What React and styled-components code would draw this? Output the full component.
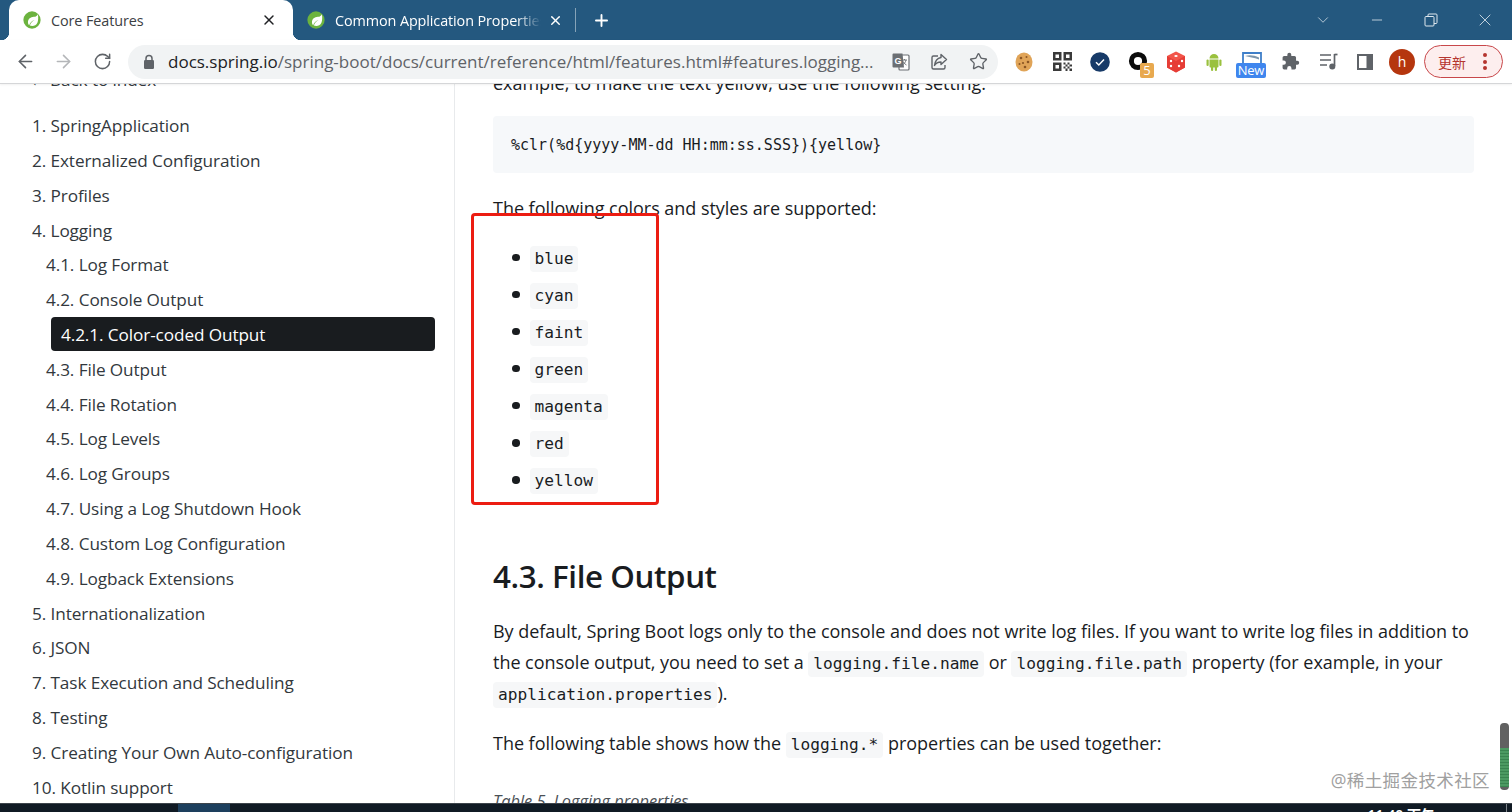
import React from "react";
import styled, { createGlobalStyle } from "styled-components";
import { ArrowLeft, ArrowRight, RotateCw, Star, X, Plus, Minus, ChevronDown } from "lucide-react";

const Global = createGlobalStyle`
  html, body { margin: 0; padding: 0; height: 100%; overflow: hidden; background: #fff; }
  #root { height: 812px; }
  * { box-sizing: border-box; }
`;

const UI = `"Open Sans", "Noto Sans", "Noto Sans CJK SC", sans-serif`;
const MONO = `"DejaVu Sans Mono", "Liberation Mono", monospace`;

const Page = styled.div`
  position: relative;
  width: 1512px;
  height: 812px;
  display: flex;
  flex-direction: column;
  overflow: hidden;
  font-family: ${UI};
  color: #191c1f;
`;

/* tab strip */
const TabStrip = styled.div`
  height: 40px;
  flex: none;
  background: #24587f;
  display: flex;
  align-items: stretch;
  padding-left: 9px;
`;
const Tab = styled.div`
  position: relative;
  width: ${(p) => p.$w}px;
  flex: none;
  display: flex;
  align-items: center;
  border-radius: 10px 10px 0 0;
  background: ${(p) => (p.$active ? "#fff" : "transparent")};
  color: ${(p) => (p.$active ? "#3c4043" : "#fff")};
  padding-left: ${(p) => p.$pad}px;
  font-size: 14.4px;
  letter-spacing: -0.1px;
  ${(p) =>
    p.$active
      ? `
    &::before, &::after {
      content: "";
      position: absolute;
      bottom: 0;
      width: 8px;
      height: 8px;
    }
    &::before { left: -8px; background: radial-gradient(circle at 0 0, #24587f 8px, #fff 8.5px); }
    &::after { right: -8px; background: radial-gradient(circle at 100% 0, #24587f 8px, #fff 8.5px); }
  `
      : ""}
`;
const TabTitle = styled.span`
  margin-left: 10px;
  width: ${(p) => p.$w}px;
  white-space: nowrap;
  overflow: hidden;
  -webkit-mask-image: ${(p) => (p.$fade ? "linear-gradient(90deg,#000 88%,transparent)" : "none")};
  mask-image: ${(p) => (p.$fade ? "linear-gradient(90deg,#000 88%,transparent)" : "none")};
`;
const TabClose = styled.span`
  display: flex;
  margin-left: ${(p) => p.$ml}px;
  color: ${(p) => (p.$light ? "#fff" : "#202124")};
`;
const TabDivider = styled.div`
  width: 1px;
  height: 24px;
  margin: 8px 0 0 10px;
  background: rgba(255, 255, 255, 0.45);
`;
const NewTab = styled.div`
  display: flex;
  align-items: center;
  margin-left: 16px;
  color: #fff;
`;
const WindowControls = styled.div`
  margin-left: auto;
  display: flex;
  align-items: center;
  color: #dfe8ef;
`;
const WinBtn = styled.div`
  width: 54px;
  display: flex;
  justify-content: center;
`;

/* toolbar */
const Toolbar = styled.div`
  height: 44px;
  flex: none;
  background: #fff;
  border-bottom: 1px solid #d5d6d8;
  display: flex;
  align-items: center;
  padding-left: 6px;
  box-shadow: 0 1px 2px rgba(0, 0, 0, 0.06);
  z-index: 2;
`;
const NavSlot = styled.div`
  width: 38.5px;
  flex: none;
  display: flex;
  justify-content: center;
  color: ${(p) => (p.$off ? "#b4b6b9" : "#5f6368")};
`;
const Omnibox = styled.div`
  width: 870px;
  height: 34px;
  margin-left: 6.5px;
  flex: none;
  border-radius: 17px;
  background: #f1f3f4;
  display: flex;
  align-items: center;
  padding-left: 14px;
`;
const Url = styled.div`
  margin-left: 12px;
  width: 714px;
  font-size: 17px;
  white-space: nowrap;
  overflow: hidden;
  color: #5f6368;
  b { font-weight: 400; color: #202124; }
`;
const OmniIcon = styled.div`
  width: ${(p) => p.$w}px;
  flex: none;
  display: flex;
  justify-content: center;
  color: #5f6368;
`;
const Extensions = styled.div`
  display: flex;
  align-items: center;
  margin-left: 7px;
`;
const ExtSlot = styled.div`
  position: relative;
  width: ${(p) => p.$w || 38}px;
  height: 34px;
  margin-left: ${(p) => p.$ml || 0}px;
  flex: none;
  display: flex;
  justify-content: center;
  align-items: center;
  color: #5f6368;
`;
const Badge = styled.span`
  position: absolute;
  right: 3px;
  top: 18px;
  width: 14px;
  height: 15px;
  background: #e8a94f;
  color: #fff;
  font-size: 13px;
  line-height: 15px;
  text-align: center;
  border-radius: 2px;
`;
const NewBadge = styled.span`
  position: absolute;
  left: 3px;
  width: 30px;
  top: 18px;
  height: 15px;
  background: #3f86ee;
  color: #fff;
  font-size: 13px;
  line-height: 15px;
  letter-spacing: -0.3px;
  text-align: center;
  border-radius: 2px;
`;
const Avatar = styled.div`
  width: 26px;
  height: 26px;
  border-radius: 50%;
  background: #b5360e;
  color: #fff;
  font-size: 14px;
  display: flex;
  align-items: center;
  justify-content: center;
`;
const UpdateButton = styled.div`
  width: 79px;
  height: 33px;
  margin-left: 9px;
  flex: none;
  border: 1.5px solid #c8474a;
  border-radius: 17px;
  background: #fdeeee;
  color: #b5352f;
  font-size: 14px;
  display: flex;
  align-items: center;
  padding-left: 13px;
`;
const Dots = styled.span`
  margin-left: 17px;
  display: flex;
  flex-direction: column;
  gap: 2.5px;
  i { width: 4px; height: 4px; border-radius: 50%; background: #b5352f; }
`;

/* page */
const Body = styled.div`
  flex: 1;
  min-height: 0;
  display: flex;
  overflow: hidden;
`;
const Sidebar = styled.nav`
  width: 455px;
  flex: none;
  border-right: 1px solid #e8eaec;
  padding-left: 32px;
  margin-top: -22px;
`;
const BackRow = styled.div`
  height: 34.84px;
  margin-bottom: 11.3px;
  display: flex;
  align-items: center;
  font-size: 17.2px;
  letter-spacing: -0.1px;
  color: #32383d;
  i { width: 18px; font-style: normal; font-size: 11px; transform: translateY(3px); }
`;
const NavRow = styled.div`
  height: 34.84px;
  display: flex;
  align-items: center;
  font-size: 17.2px;
  letter-spacing: -0.1px;
  white-space: nowrap;
  color: #32383d;
  padding-left: ${(p) => p.$indent || 0}px;
`;
const ActiveRow = styled.div`
  width: 384px;
  height: 34px;
  margin: 0.4px 0 0.44px 19px;
  padding-left: 10px;
  border-radius: 4px;
  background: #191c1f;
  color: #fff;
  display: flex;
  align-items: center;
  font-size: 17.2px;
  letter-spacing: -0.1px;
`;
const Main = styled.main`
  flex: 1;
  min-width: 0;
  padding: 0 38px 0 38px;
  margin-top: -16px;
`;
const Para = styled.p`
  margin: ${(p) => p.$mt || 0}px 0 0;
  font-size: 18px;
  line-height: 31px;
  letter-spacing: -0.03px;
  white-space: nowrap;
`;
const CodeBlock = styled.pre`
  margin: 17px 0 0;
  height: 57px;
  padding: 0 18px;
  background: #f6f8fa;
  border-radius: 4px;
  font-family: ${MONO};
  font-size: 15px;
  line-height: 58px;
`;
const Bullets = styled.ul`
  margin: 16px 0 0;
  padding: 0 0 0 37px;
  list-style: none;
`;
const Bullet = styled.li`
  height: 37.05px;
  display: flex;
  align-items: center;
  &::before {
    content: "";
    width: 7.5px;
    height: 7.5px;
    border-radius: 50%;
    background: #191c1f;
    margin: 0 10px 0 -18px;
    transform: translateY(-1px);
  }
`;
const Code = styled.code`
  display: inline-block;
  height: 26px;
  padding: 0 5px;
  border-radius: 4px;
  background: #f6f7f8;
  font-family: ${MONO};
  font-size: 16.2px;
  line-height: 26px;
  letter-spacing: 0;
  vertical-align: baseline;
`;
const Heading = styled.h3`
  margin: 55px 0 0;
  font-size: 31.3px;
  line-height: 44px;
  font-weight: 600;
  letter-spacing: -0.4px;
  white-space: nowrap;
`;
const Caption = styled.div`
  margin-top: 30px;
  font-size: 16.4px;
  line-height: 24px;
  font-style: italic;
  color: #4a5056;
`;

/* overlays */
const RedBox = styled.div`
  position: absolute;
  left: 471px;
  top: 213px;
  width: 188px;
  height: 292px;
  border: 3.5px solid #ec1c12;
  border-radius: 4px;
  pointer-events: none;
`;
const Watermark = styled.div`
  position: absolute;
  right: 22px;
  top: 767px;
  font-size: 17.5px;
  color: #a0a0a0;
  letter-spacing: 0.4px;
`;
const Minimap = styled.div`
  position: absolute;
  left: 1500px;
  top: 723px;
  width: 9px;
  height: 67px;
  border-radius: 4px;
  overflow: hidden;
  background: repeating-linear-gradient(#4c9a62 0 2px, #3a8450 2px 3px) 0 25px / 100% 39px no-repeat, #616161;
`;

/* taskbar */
const Taskbar = styled.div`
  height: 9px;
  flex: none;
  background: #101a24;
  border-top: 1px solid #3d444b;
  display: flex;
  overflow: hidden;
  position: relative;
`;
const TaskApp = styled.div`
  width: 52px;
  margin-left: 178px;
  background: #1d3f5d;
`;
const Clock = styled.div`
  margin-left: auto;
  color: #fff;
  font-size: 14px;
  font-weight: 600;
  line-height: 15px;
  padding-top: 3px;
  white-space: nowrap;
`;
const TaskDivider = styled.div`
  width: 1px;
  margin: 0 5px 0 71px;
  background: #7c838a;
`;

const Spring = ({ s = 18 }) => (
  <svg width={s} height={s} viewBox="0 0 20 20" style={{ flex: "none" }}>
    <circle cx="10" cy="10" r="9.6" fill="#6cb33f" />
    <path d="M16.5 3.5c-.6 1.7-2 2.8-4.400 3-3.600.3-6.600 2.300-6.600 6 0 1.400.6 2.600 1.400 3.300.8-2.600 3-4.700 6-5.700-2.500 1.400-4.400 3.300-5.300 6 3 1.200 6.900.3 8.400-3 1-2.300 1.200-6.500.500-9.600z" fill="#fff" />
  </svg>
);
const Restore = () => (
  <svg width="14" height="14" viewBox="0 0 14 14" fill="none" stroke="currentColor" strokeWidth="1">
    <rect x="1" y="3.500" width="9" height="9.500" rx="1" />
    <path d="M4 3.500V2a1 1 0 0 1 1-1h7a1 1 0 0 1 1 1v7.500a1 1 0 0 1-1 1h-2" />
  </svg>
);
const Lock = () => (
  <svg width="14" height="16" viewBox="0 0 14 16" fill="#5f6368">
    <rect x="2" y="6" width="10" height="9" rx="1.200" />
    <path d="M4 6V4.500a3 3 0 0 1 6 0V6" fill="none" stroke="#5f6368" strokeWidth="1.500" />
  </svg>
);
const Translate = () => (
  <svg width="20" height="20" viewBox="0 0 20 20">
    <rect x="8" y="3" width="10" height="15" rx="1" fill="#fff" stroke="#6b6f73" strokeWidth="1.200" />
    <path d="M2.500 1.500h9l1.500 14h-10.500a1 1 0 0 1-1-1v-12a1 1 0 0 1 1-1z" fill="#6b6f73" />
    <text x="3.500" y="11.500" fontSize="9" fontWeight="700" fill="#fff" fontFamily="Liberation Sans">G</text>
    <path d="M11 8h5M13.500 7v1M15 8c-.5 2.500-2 4-3.500 5M12 9.500c.8 1.500 2 2.800 3.500 3.500" stroke="#6b6f73" strokeWidth="0.900" fill="none" />
  </svg>
);
const Share = () => (
  <svg width="18" height="18" viewBox="0 0 18 18" fill="none" stroke="#5f6368" strokeWidth="1.400">
    <path d="M8 3H3.500A1.500 1.500 0 0 0 2 4.500v10A1.500 1.500 0 0 0 3.500 16h10a1.500 1.500 0 0 0 1.500-1.500V12" />
    <path d="M11 1.500l5.500 5-5.500 5V9c-3 0-5 .8-6.500 3.500C5 8.500 7.500 5.200 11 4.500z" strokeLinejoin="round" />
  </svg>
);
const Cookie = () => (
  <svg width="18" height="20" viewBox="0 0 18 20">
    <ellipse cx="9" cy="10" rx="8.500" ry="9.500" fill="#e0a458" />
    <g fill="#8a5523">
      <circle cx="6" cy="6" r="1.300" /><circle cx="11.500" cy="5" r="1" /><circle cx="13" cy="10" r="1.300" />
      <circle cx="8" cy="11" r="1.100" /><circle cx="4.500" cy="12" r="1" /><circle cx="10" cy="15" r="1.300" />
    </g>
  </svg>
);
const Qr = () => (
  <svg width="19" height="19" viewBox="0 0 19 19">
    <path d="M0 0h8.500v8.500H0zM10.500 0H19v8.500h-8.500zM0 10.500h8.500V19H0z" fill="#3a3a3a" />
    <path d="M2.500 2.500h3.500v3.500H2.500zM13 2.500h3.500v3.500H13zM2.500 13h3.500v3.500H2.500z" fill="#fff" />
    <path d="M10.500 10.500h2v2h-2zM14.500 10.500h2v2h-2zM12.500 12.500h2v2h-2zM16.500 12.500H19v2h-2.500zM10.500 14.500h2v2h-2zM14.500 14.500h2v2h-2zM12.500 16.500h2V19h-2zM16.500 16.500H19V19h-2.500z" fill="#3a3a3a" />
  </svg>
);
const Check = () => (
  <svg width="20" height="20" viewBox="0 0 20 20">
    <circle cx="10" cy="10" r="9.800" fill="#173a68" />
    <path d="M6 10.300l2.800 2.700L14 7.500" fill="none" stroke="#fff" strokeWidth="1.500" />
  </svg>
);
const Ring = () => (
  <svg width="20" height="20" viewBox="0 0 20 20" style={{ marginLeft: -1, marginTop: -2 }}>
    <circle cx="10" cy="10" r="6.600" fill="none" stroke="#0c0c0c" strokeWidth="5" />
  </svg>
);
const Dice = () => (
  <svg width="20" height="22" viewBox="0 0 20 22">
    <path d="M10 .5l9 4.500v11.500L10 21.500 1 16.500V5z" fill="#f2554a" />
    <path d="M10 10v11.500L1 16.500V5zM10 10l9-5v11.500l-9 5z" fill="#e63d36" />
    <g fill="#fff">
      <ellipse cx="10" cy="5" rx="1.700" ry="1.100" /><circle cx="5" cy="10" r="1.200" /><circle cx="5" cy="15" r="1.200" />
      <circle cx="13" cy="15" r="1.200" /><circle cx="16" cy="10" r="1.200" />
    </g>
  </svg>
);
const Android = () => (
  <svg width="16" height="20" viewBox="0 0 16 20" fill="#9ac13e">
    <path d="M3.500 6.500a4.500 4.500 0 0 1 9 0zM3.500 7.500h9v7a1 1 0 0 1-1 1h-7a1 1 0 0 1-1-1z" />
    <rect x="0.500" y="7.500" width="2.200" height="6.500" rx="1.100" /><rect x="13.300" y="7.500" width="2.200" height="6.500" rx="1.100" />
    <rect x="5" y="14" width="2.200" height="5" rx="1.100" /><rect x="8.800" y="14" width="2.200" height="5" rx="1.100" />
  </svg>
);
const Book = () => (
  <svg width="20" height="12" viewBox="0 0 20 12" style={{ marginBottom: 8 }}>
    <path d="M1 12V1h18v11" fill="#fff" stroke="#3f7fc9" strokeWidth="1.800" />
    <path d="M3 4c4-1.500 9-1 14 1.500v2C12 5.500 7 5 3 4z" fill="#7d96ad" />
  </svg>
);
const PuzzleFill = () => (
  <svg width="19" height="19" viewBox="0 0 24 24" fill="#5f6368">
    <path d="M20.500 11H19V7a2 2 0 0 0-2-2h-4V3.500a2.500 2.500 0 0 0-5 0V5H4a2 2 0 0 0-2 2v3.800h1.500a2.700 2.700 0 0 1 0 5.400H2V20a2 2 0 0 0 2 2h3.800v-1.500a2.700 2.700 0 0 1 5.400 0V22H17a2 2 0 0 0 2-2v-4h1.500a2.500 2.500 0 0 0 0-5z" />
  </svg>
);
const Queue = () => (
  <svg width="19" height="17" viewBox="0 0 19 17" fill="none" stroke="#5f6368" strokeWidth="1.700">
    <path d="M1 2h11M1 7h11M1 12h7" />
    <path d="M15.500 1v12" />
    <circle cx="13.300" cy="13.500" r="2.200" fill="#5f6368" />
    <path d="M15.500 1.500h3" />
  </svg>
);
const SidePanel = () => (
  <svg width="16" height="16" viewBox="0 0 16 16" fill="none">
    <rect x="1" y="1" width="14" height="14" stroke="#5f6368" strokeWidth="2" />
    <rect x="9.500" y="1" width="5.500" height="14" fill="#5f6368" />
  </svg>
);

const items = [
  ["1. SpringApplication"], ["2. Externalized Configuration"], ["3. Profiles"], ["4. Logging"],
  ["4.1. Log Format", 14], ["4.2. Console Output", 14], ["4.2.1. Color-coded Output", 0, true],
  ["4.3. File Output", 14], ["4.4. File Rotation", 14], ["4.5. Log Levels", 14], ["4.6. Log Groups", 14],
  ["4.7. Using a Log Shutdown Hook", 14], ["4.8. Custom Log Configuration", 14], ["4.9. Logback Extensions", 14],
  ["5. Internationalization"], ["6. JSON"], ["7. Task Execution and Scheduling"], ["8. Testing"],
  ["9. Creating Your Own Auto-configuration"], ["10. Kotlin support"],
];
const colors = ["blue", "cyan", "faint", "green", "magenta", "red", "yellow"];

export default function App() {
  return (
    <Page>
      <Global />
      <TabStrip>
        <Tab $active $w={284} $pad={14}>
          <Spring />
          <TabTitle $w={210}>Core Features</TabTitle>
          <TabClose $ml={0}><X size={16} strokeWidth={2.2} /></TabClose>
        </Tab>
        <Tab $w={272} $pad={14}>
          <Spring />
          <TabTitle $w={206} $fade>Common Application Properties</TabTitle>
          <TabClose $ml={7} $light><X size={15} strokeWidth={2.2} /></TabClose>
        </Tab>
        <TabDivider />
        <NewTab><Plus size={19} strokeWidth={2.4} /></NewTab>
        <WindowControls>
          <WinBtn><ChevronDown size={18} strokeWidth={1} /></WinBtn>
          <WinBtn><Minus size={16} strokeWidth={1.2} /></WinBtn>
          <WinBtn><Restore /></WinBtn>
          <WinBtn><X size={20} strokeWidth={1} /></WinBtn>
        </WindowControls>
      </TabStrip>
      <Toolbar>
        <NavSlot><ArrowLeft size={21} strokeWidth={1.8} /></NavSlot>
        <NavSlot $off><ArrowRight size={21} strokeWidth={1.8} /></NavSlot>
        <NavSlot><RotateCw size={19} strokeWidth={1.9} /></NavSlot>
        <Omnibox>
          <Lock />
          <Url><b>docs.spring.io</b>/spring-boot/docs/current/reference/html/features.html#features.logging...</Url>
          <OmniIcon $w={38}><Translate /></OmniIcon>
          <OmniIcon $w={38}><Share /></OmniIcon>
          <OmniIcon $w={40}><Star size={19} strokeWidth={1.7} /></OmniIcon>
        </Omnibox>
        <Extensions>
          <ExtSlot><Cookie /></ExtSlot>
          <ExtSlot><Qr /></ExtSlot>
          <ExtSlot><Check /></ExtSlot>
          <ExtSlot><Ring /><Badge>5</Badge></ExtSlot>
          <ExtSlot><Dice /></ExtSlot>
          <ExtSlot><Android /></ExtSlot>
          <ExtSlot><Book /><NewBadge>New</NewBadge></ExtSlot>
          <ExtSlot><PuzzleFill /></ExtSlot>
          <ExtSlot><Queue /></ExtSlot>
          <ExtSlot $w={36}><SidePanel /></ExtSlot>
          <ExtSlot $w={26} $ml={6}><Avatar>h</Avatar></ExtSlot>
        </Extensions>
        <UpdateButton>更新<Dots><i /><i /><i /></Dots></UpdateButton>
      </Toolbar>
      <Body>
        <Sidebar>
          <BackRow><i>←</i>Back to index</BackRow>
          {items.map(([t, indent, active]) =>
            active ? <ActiveRow key={t}>{t}</ActiveRow> : <NavRow key={t} $indent={indent}>{t}</NavRow>
          )}
        </Sidebar>
        <Main>
          <Para>example, to make the text yellow, use the following setting:</Para>
          <CodeBlock>%clr(%d{"{"}yyyy-MM-dd HH:mm:ss.SSS{"}"}){"{"}yellow{"}"}</CodeBlock>
          <Para $mt={20}>The following colors and styles are supported:</Para>
          <Bullets>
            {colors.map((c) => <Bullet key={c}><Code>{c}</Code></Bullet>)}
          </Bullets>
          <Heading>4.3. File Output</Heading>
          <Para $mt={18}>
            By default, Spring Boot logs only to the console and does not write log files. If you want to write log files in addition to<br />
            the console output, you need to set a <Code>logging.file.name</Code> or <Code>logging.file.path</Code> property (for example, in your<br />
            <Code>application.properties</Code>).
          </Para>
          <Para $mt={19}>The following table shows how the <Code>logging.*</Code> properties can be used together:</Para>
          <Caption>Table 5. Logging properties</Caption>
        </Main>
      </Body>
      <Taskbar>
        <TaskApp />
        <Clock>11:40 下午</Clock>
        <TaskDivider />
      </Taskbar>
      <RedBox />
      <Minimap />
      <Watermark>@稀土掘金技术社区</Watermark>
    </Page>
  );
}
